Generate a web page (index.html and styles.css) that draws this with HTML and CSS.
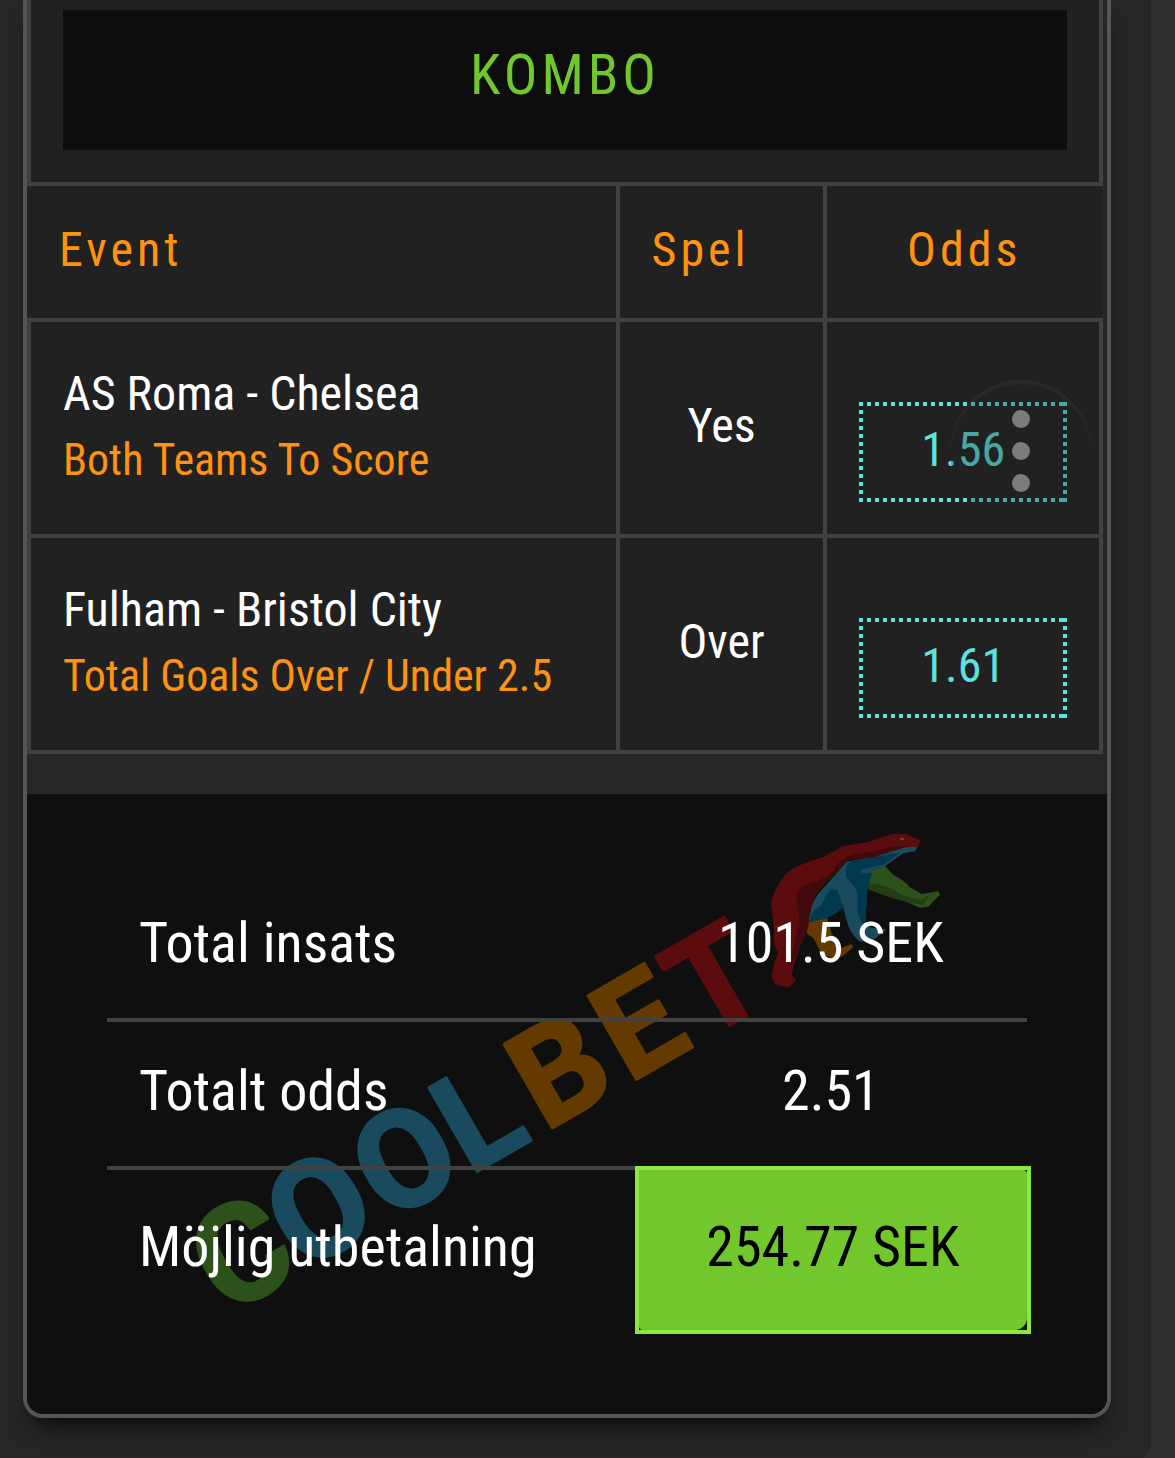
FILE: index.html
```
<!DOCTYPE html>
<html lang="sv">
<head>
    <meta charset="UTF-8">
    <meta name="viewport" content="width=device-width, initial-scale=1.0">
    <title>Kombo</title>
    <link rel="stylesheet" href="styles.css">
</head>
<body>
    <main class="panel">
        <div class="card">
            <table class="bets">
                <colgroup>
                    <col class="col-event">
                    <col class="col-bet">
                    <col class="col-odds">
                </colgroup>
                <thead>
                    <tr>
                        <td class="title-cell" colspan="3"><h1 class="title">KOMBO</h1></td>
                    </tr>
                    <tr>
                        <th scope="col">Event</th>
                        <th scope="col">Spel</th>
                        <th scope="col" class="center">Odds</th>
                    </tr>
                </thead>
                <tbody>
                    <tr>
                        <td class="event">
                            <div class="match">AS Roma - Chelsea</div>
                            <div class="market">Both Teams To Score</div>
                        </td>
                        <td class="pick">Yes</td>
                        <td class="odds-cell"><div class="odds">1.56</div></td>
                    </tr>
                    <tr>
                        <td class="event">
                            <div class="match">Fulham - Bristol City</div>
                            <div class="market">Total Goals Over / Under 2.5</div>
                        </td>
                        <td class="pick">Over</td>
                        <td class="odds-cell"><div class="odds">1.61</div></td>
                    </tr>
                </tbody>
            </table>

            <div class="summary">
                <svg class="watermark" viewBox="27 794 1080 620" aria-hidden="true">
                    <g class="wordmark" transform="rotate(-30)">
                        <text y="1253"><tspan class="green" x="-462">C</tspan><tspan class="blue" x="-375 -276 -181">OOL</tspan><tspan class="orange" x="-94 3">BE</tspan><tspan class="red" x="87">T</tspan></text>
                    </g>
                    <!-- bear -->
                    <g transform="translate(740 820) scale(.3333)">
                        <path fill="#643a00" d="M203 305 L262 295 L275 340 L300 385 L335 372 L340 382 L305 410 L275 415 L245 400 L220 355 L200 340 Z"/>
                        <path fill="#2c511a" d="M358 150 L400 148 L435 138 L460 165 Q490 178 510 202 L545 222 L595 214 L600 224 L565 260 L540 263 L500 246 L450 232 L385 208 Z"/>
                        <path fill="#223e18" d="M387 190 Q450 195 485 225 L540 240 L568 225 L550 256 L500 246 L450 232 L385 208 Z"/>
                        <path fill="#194a5e" d="M205 307 Q212 240 250 205 L320 125 L400 112 L480 82 L535 78 L525 94 L490 100 L435 138 L400 148 Q375 200 380 250 L375 305 Q385 325 412 325 L440 328 L400 360 L360 365 Q330 345 318 295 L310 262 Q270 300 205 307 Z"/>
                        <path fill="#00394f" d="M222 270 Q245 262 258 225 Q270 203 292 210 L310 262 Q270 300 205 307 Z M318 170 Q312 130 345 120 L480 98 L435 132 L362 150 L365 160 L398 160 Q378 200 378 250 L378 315 L400 325 Q350 320 352 245 Q355 205 340 198 Z"/>
                        <path fill="#5d0c0d" d="M95 470 Q100 430 115 400 Q98 380 103 330 L93 250 Q105 195 145 155 Q180 130 250 110 L310 78 L375 68 L455 42 L500 42 L542 62 L535 80 L480 82 L400 112 L325 120 Q240 200 225 230 Q205 280 205 320 Q165 410 155 465 L168 482 L145 503 L105 492 Z"/>
                        <path fill="#42090b" d="M170 245 Q165 210 190 195 L240 180 Q275 165 290 135 Q315 104 375 98 L470 78 L500 80 L400 112 L325 120 Q240 200 225 230 Q205 280 205 320 L165 410 L150 440 Q165 350 180 310 Z"/>
                        <ellipse fill="#66413e" cx="486" cy="57" rx="7" ry="4"/>
                    </g>
                </svg>
                <table class="totals">
                    <tbody>
                        <tr>
                            <th scope="row">Total insats</th>
                            <td>101.5 SEK</td>
                        </tr>
                        <tr>
                            <th scope="row">Totalt odds</th>
                            <td>2.51</td>
                        </tr>
                        <tr class="payout-row">
                            <th scope="row">Möjlig utbetalning</th>
                            <td class="payout"><div class="payout-sum">254.77 SEK</div></td>
                        </tr>
                    </tbody>
                </table>
            </div>
        </div>
        <button class="more" type="button" aria-label="Meny">
            <span class="dot"></span>
            <span class="dot"></span>
            <span class="dot"></span>
        </button>
    </main>
</body>
</html>
```
FILE: styles.css
```
* {
    box-sizing: border-box;
}
body {
    margin: 0;
    background-color: #2f2f2f;
    font-family: 'Roboto Condensed', Roboto, 'Liberation Sans', sans-serif;
    font-size: 48px;
    color: #fff;
}
.panel {
    position: relative;
    margin-right: 24px;
    padding: 0 40px 39px 23px;
    background-color: #262626;
    border-radius: 0 0 12px 0;
}
.card {
    border: 4px solid #555;
    border-top: 0;
    border-radius: 0 0 20px 20px;
    box-shadow: 0 16px 24px -12px #000;
    overflow: hidden;
}

/* bets */
.bets {
    width: calc(100% - 4px);
    margin-bottom: 40px;
    border-collapse: collapse;
    table-layout: fixed;
    background-color: #212121;
}
.col-event {
    width: 54.9%;
}
.col-bet {
    width: 19.4%;
}
.bets td {
    height: 216px;
    padding: 0 32px;
    border: 4px solid #414141;
}
.bets th {
    height: 136px;
    padding: 0 32px 6px;
    border: 4px solid #414141;
    border-left: 0;
    border-right: 0;
    color: #ff920f;
    font-weight: 400;
    letter-spacing: 4px;
    text-align: left;
}
.bets th:first-child {
    padding-left: 30px;
}
.bets th + th {
    border-left: 4px solid #414141;
}
.bets .center {
    text-align: center;
}
.bets .title-cell {
    height: auto;
    padding: 10px 32px 32px;
    border-top: 0;
}
.title {
    margin: 0;
    padding: 33px 0 43px;
    background-color: #0d0d0d;
    color: #72c72d;
    font-size: 56px;
    font-weight: 400;
    line-height: 64px;
    letter-spacing: 4px;
    text-align: center;
}
.bets .event {
    padding-bottom: 4px;
}
.match {
    line-height: 68px;
}
.market {
    color: #ff920f;
    font-size: 44px;
    line-height: 64px;
}
.bets .pick {
    padding: 0 0 6px;
    text-align: center;
}
.bets .odds-cell {
    padding: 48px 32px 0;
}
/* square dots on all four sides */
.odds {
    height: 100px;
    background-image:
        repeating-linear-gradient(to right, #5ce1e1 0 4px, transparent 4px 8px),
        repeating-linear-gradient(to right, #5ce1e1 0 4px, transparent 4px 8px),
        repeating-linear-gradient(to bottom, #5ce1e1 0 4px, transparent 4px 8px),
        repeating-linear-gradient(to bottom, #5ce1e1 0 4px, transparent 4px 8px);
    background-position: top, bottom, left, right;
    background-size: 100% 4px, 100% 4px, 4px 100%, 4px 100%;
    background-repeat: no-repeat;
    color: #5ce1e1;
    line-height: 96px;
    text-align: center;
}

/* totals */
.summary {
    position: relative;
    padding: 80px 80px 84px;
    background-color: #0f0f0f;
}
.watermark {
    position: absolute;
    inset: 0;
    width: 100%;
    height: 100%;
}
.wordmark {
    font-family: Roboto, 'Liberation Sans', sans-serif;
    font-size: 136px;
    font-weight: 700;
    stroke-width: 3px;
    stroke-linejoin: round;
}
.green {
    fill: #2c511a;
    stroke: #2c511a;
}
.blue {
    fill: #194a5e;
    stroke: #194a5e;
}
.orange {
    fill: #643a00;
    stroke: #643a00;
}
.red {
    fill: #5d0c0d;
    stroke: #5d0c0d;
}
.totals {
    position: relative;
    width: 100%;
    border-collapse: separate;
    border-spacing: 0;
    table-layout: fixed;
    font-size: 56px;
}
.totals th,
.totals td {
    height: 148px;
    padding: 0 4px 6px 0;
    border-bottom: 4px solid #414141;
    font-weight: 400;
    text-align: center;
}
.totals th {
    width: 57.8%;
    padding-left: 32px;
    text-align: left;
    white-space: nowrap;
}
.totals .payout-row th,
.totals .payout-row td {
    height: 160px;
    border-bottom: 0;
}
.totals .payout {
    padding: 0;
    outline: 4px solid #8ce83f;
}
.payout-sum {
    height: 160px;
    border-radius: 0 4px 12px 4px;
    background-color: #72c72d;
    color: #000;
    line-height: 154px;
}

/* floating menu button */
.more {
    position: absolute;
    top: 380px;
    right: 59px;
    display: flex;
    flex-direction: column;
    align-items: center;
    justify-content: center;
    gap: 14px;
    width: 142px;
    height: 142px;
    padding: 0;
    border: 0;
    border-radius: 50%;
    background-color: rgba(33, 33, 33, .3);
    box-shadow: inset 0 4px 3px rgba(255, 255, 255, .05);
}
.dot {
    width: 18px;
    height: 18px;
    border-radius: 50%;
    background-color: #7b7b7b;
}
```
